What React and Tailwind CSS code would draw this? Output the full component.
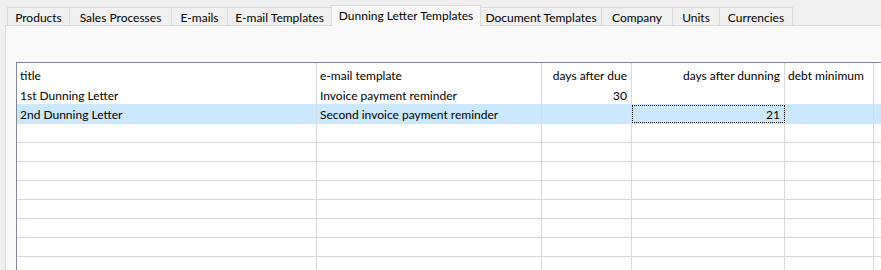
import React from 'react';

const tabs = [
  { label: 'Products', width: 'w-[63px]' },
  { label: 'Sales Processes', width: 'w-[103px]' },
  { label: 'E-mails', width: 'w-[57px]' },
  { label: 'E-mail Templates', width: 'w-[105px]' },
  { label: 'Dunning Letter Templates', width: 'w-[150px]', active: true },
  { label: 'Document Templates', width: 'w-[122px]' },
  { label: 'Company', width: 'w-[72px]' },
  { label: 'Units', width: 'w-[48px]' },
  { label: 'Currencies', width: 'w-[74px]' },
];

const columns = [
  { key: 'title', label: 'title', width: 'w-[300px]', align: 'text-left' },
  { key: 'template', label: 'e-mail template', width: 'w-[225px]', align: 'text-left' },
  { key: 'due', label: 'days after due', width: 'w-[90px]', align: 'text-right' },
  { key: 'dunning', label: 'days after dunning', width: 'w-[153px]', align: 'text-right' },
  { key: 'debt', label: 'debt minimum', width: 'w-[89px]', align: 'text-left' },
];

const rows = [
  { title: '1st Dunning Letter', template: 'Invoice payment reminder', due: '30', dunning: '', debt: '' },
  { title: '2nd Dunning Letter', template: 'Second invoice payment reminder', due: '', dunning: '21', debt: '', selected: true },
];

const emptyRows = Array.from({ length: 9 });

const Tab = ({ label, width, active }) => {
  if (active) {
    return (
      <div
        className={`${width} -ml-px h-[21px] mb-[-1px] relative z-10 flex items-center justify-center whitespace-nowrap border border-b-0 border-[#d9d9d9] bg-[#f9f9f9] pb-[1px]`}
      >
        {label}
      </div>
    );
  }
  return (
    <div
      className={`${width} -ml-px h-[18px] flex items-center justify-center whitespace-nowrap border border-b-0 border-[#d9d9d9] bg-[#f0f0f0] pt-[2px]`}
    >
      {label}
    </div>
  );
};

const App = () => {
  return (
    <div className="w-[881px] h-[270px] overflow-hidden bg-[#f0f0f0] text-[12px] text-black font-['Segoe_UI','Lato',sans-serif] leading-none">
      <div className="flex items-end h-[25px] pl-[8px]">
        {tabs.map((tab) => (
          <Tab key={tab.label} {...tab} />
        ))}
      </div>
      <div className="ml-[5px] h-[245px] border-l border-t border-[#d9d9d9] bg-[#f9f9f9] pt-[36px] pl-[10px]">
        <div className="h-full border-l border-t border-[#828790] bg-white">
          <div className="flex h-[23px]">
            {columns.map((col) => (
              <div
                key={col.key}
                className={`${col.width} shrink-0 border-r border-[#d9d9d9] pl-[3px] pr-[4px] pt-[2px] flex items-center whitespace-nowrap ${
                  col.align === 'text-right' ? 'justify-end' : ''
                }`}
              >
                {col.label}
              </div>
            ))}
            <div className="flex-1" />
          </div>
          {rows.map((row) => (
            <div
              key={row.title}
              className={`flex h-[19px] border-b ${
                row.selected ? 'bg-[#cce8ff] border-[#cce8ff]' : 'border-[#cce8ff]'
              }`}
            >
              {columns.map((col) => (
                <div
                  key={col.key}
                  className={`${col.width} shrink-0 border-r border-[#d9d9d9] pl-[3px] pr-[4px] pt-[2px] flex items-center whitespace-nowrap ${
                    col.align === 'text-right' ? 'justify-end' : ''
                  } ${
                    row.selected && col.key === 'dunning'
                      ? 'outline outline-1 outline-dotted outline-black outline-offset-[-1px]'
                      : ''
                  }`}
                >
                  {row[col.key]}
                </div>
              ))}
              <div className="flex-1" />
            </div>
          ))}
          {emptyRows.map((_, i) => (
            <div key={i} className="flex h-[19px] border-b border-[#d9d9d9]">
              {columns.map((col) => (
                <div key={col.key} className={`${col.width} shrink-0 border-r border-[#d9d9d9]`} />
              ))}
              <div className="flex-1" />
            </div>
          ))}
        </div>
      </div>
    </div>
  );
};

export default App;
